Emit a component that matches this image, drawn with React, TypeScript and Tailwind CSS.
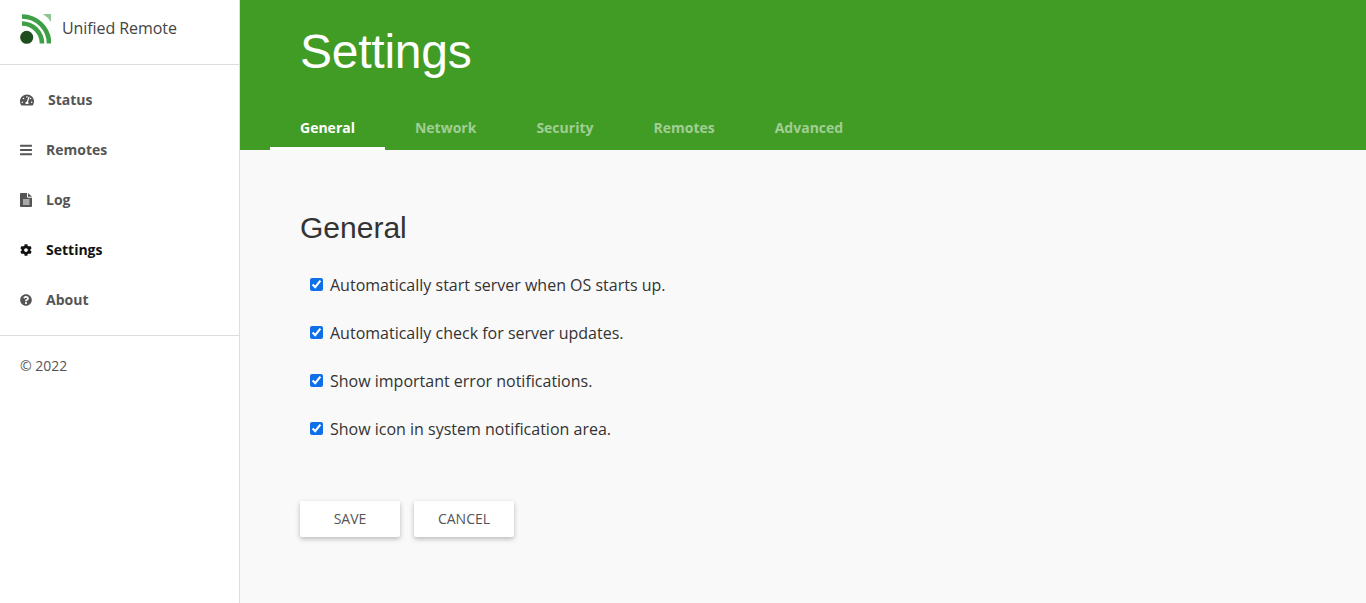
import { FaBars, FaCog, FaQuestionCircle, FaTachometerAlt } from "react-icons/fa";

function FileTextIcon({ className }: { className?: string }) {
  return (
    <svg viewBox="0 0 12 14" className={className} fill="currentColor">
      <path d="M0 .8C0 .4.4 0 .8 0H7v3.8c0 .5.4.9.9.9H12v8.5c0 .4-.4.8-.8.8H.8c-.4 0-.8-.4-.8-.8V.8Z" />
      <path d="M8 0l4 3.7H8V0Z" />
      <path d="M3 6.5h6.5v1H3zM3 8.5h6.5v1H3zM3 10.5h6.5v1H3z" fill="#fff" />
    </svg>
  );
}

const navItems = [
  { label: "Status", icon: FaTachometerAlt, iconWidth: "w-[14px]", gap: "gap-[14px]" },
  { label: "Remotes", icon: FaBars, iconWidth: "w-3", gap: "gap-[14px]" },
  { label: "Log", icon: FileTextIcon, iconWidth: "w-3", gap: "gap-[14px]" },
  { label: "Settings", icon: FaCog, iconWidth: "w-3", gap: "gap-[14px]", active: true },
  { label: "About", icon: FaQuestionCircle, iconWidth: "w-3", gap: "gap-[14px]" },
];

const tabs = ["General", "Network", "Security", "Remotes", "Advanced"];

const options = [
  "Automatically start server when OS starts up.",
  "Automatically check for server updates.",
  "Show important error notifications.",
  "Show icon in system notification area.",
];

function Logo() {
  return (
    <svg width="31" height="31" viewBox="0 0 31 31" className="shrink-0">
      <circle cx="6.7" cy="23.3" r="6.5" fill="#1e4d1e" />
      <path d="M2 9.5 A20 20 0 0 1 22 29.5" fill="none" stroke="#3f9f46" strokeWidth="4.6" />
      <path d="M2 2.5 A27 27 0 0 1 29 29.5" fill="none" stroke="#3f9f46" strokeWidth="4.6" />
      <path d="M23 0 H31 V8 A27 27 0 0 0 23 0 Z" fill="#3f9f46" fillOpacity="0.6" />
    </svg>
  );
}

export default function App() {
  return (
    <div className="flex h-[603px] overflow-hidden bg-[#f9f9f9] font-['Open_Sans',sans-serif] text-[#333]">
      {/* Sidebar */}
      <aside className="w-[240px] shrink-0 border-r border-[#ddd] bg-white">
        <div className="flex h-[65px] border-b border-[#ddd] pt-[14px] pl-5">
          <Logo />
          <span className="pt-[2px] pl-[11px] text-base tracking-[-0.07px] text-[#444]">Unified Remote</span>
        </div>
        <nav className="flex flex-col border-b border-[#ddd] py-[10px]">
          {navItems.map(item => {
            const Icon = item.icon;
            return (
              <a
                key={item.label}
                href="#"
                className={`flex h-[50px] items-center pl-5 text-sm font-bold ${item.gap} ${
                  item.active ? "text-[#111]" : "text-[#555]"
                }`}
              >
                <Icon className={`h-[14px] shrink-0 ${item.iconWidth}`} />
                {item.label}
              </a>
            );
          })}
        </nav>
        <p className="pt-5 pl-5 text-sm text-[#555]">© 2022</p>
      </aside>

      <main className="min-w-0 flex-1">
        {/* Header */}
        <header className="flex h-[150px] flex-col justify-between bg-[#419c26] pl-[30px]">
          <h1 className="pt-[24px] pl-[30px] font-['Liberation_Sans',sans-serif] text-[48px] leading-[55px] tracking-[-0.25px] text-white">
            Settings
          </h1>
          <div className="flex">
            {tabs.map((tab, i) => (
              <a
                key={tab}
                href="#"
                className={`h-[45px] px-[30px] pt-[13px] text-sm font-bold ${
                  i === 0 ? "border-b-[3px] border-white text-white" : "text-[#a1ce93]"
                }`}
              >
                {tab}
              </a>
            ))}
          </div>
        </header>

        {/* General tab */}
        <section className="px-[60px] pt-[60px]">
          <h2 className="font-['Liberation_Sans',sans-serif] text-[30px] leading-[35px] text-[#333]">
            General
          </h2>
          <div className="flex flex-col pt-[16px]">
            {options.map(option => (
              <label key={option} className="flex h-[48px] items-center pl-[10px] text-base text-[#333]">
                <input
                  type="checkbox"
                  defaultChecked
                  className="m-0 mr-[7px] mb-[2px] size-[13px] accent-[#0f6fe6]"
                />
                {option}
              </label>
            ))}
          </div>
          <div className="flex gap-[14px] pt-[48px]">
            <button className="h-9 w-[100px] rounded-[2px] bg-white text-sm text-[#555] shadow-[0_2px_5px_rgba(0,0,0,0.26)]">
              SAVE
            </button>
            <button className="h-9 w-[100px] rounded-[2px] bg-white text-sm text-[#555] shadow-[0_2px_5px_rgba(0,0,0,0.26)]">
              CANCEL
            </button>
          </div>
        </section>
      </main>
    </div>
  );
}
